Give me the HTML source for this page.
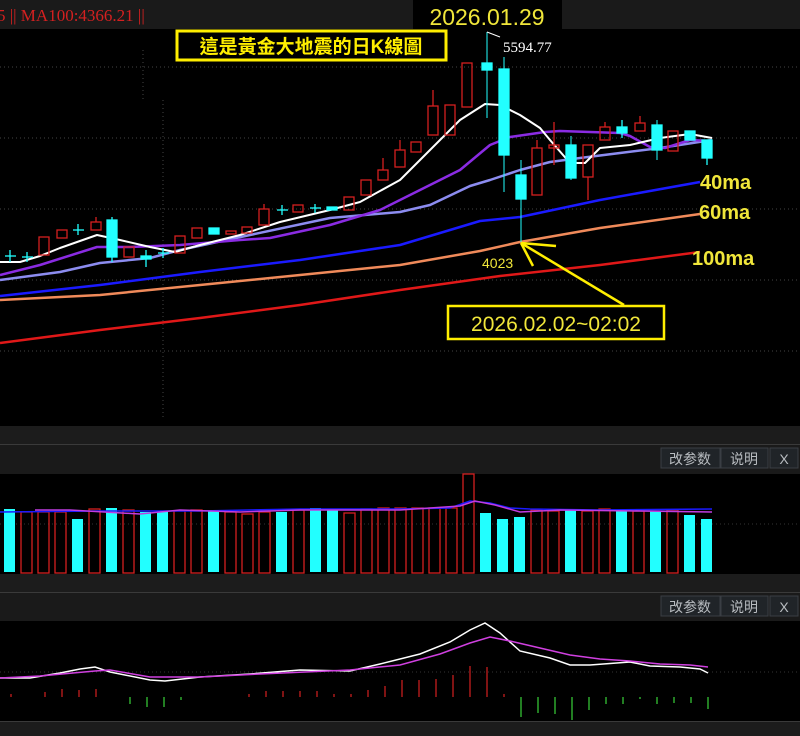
<!DOCTYPE html>
<html><head><meta charset="utf-8"><style>
html,body{margin:0;padding:0;background:#000;width:800px;height:736px;overflow:hidden}
svg{display:block}
.btn{font-family:"Liberation Sans","Noto Sans CJK SC",sans-serif;font-size:14px;fill:#b8bcc0}
</style></head><body>
<svg width="800" height="736" viewBox="0 0 800 736" xmlns="http://www.w3.org/2000/svg">
<rect width="800" height="736" fill="#000"/>
<rect x="0" y="0" width="800" height="29" fill="#1a1a1a"/>
<text x="-3" y="21" font-family="Liberation Serif,serif" font-size="17" fill="#d42020">5 ||  MA100:4366.21 ||</text>
<rect x="413" y="0" width="149" height="30" fill="#000"/>
<text x="487" y="25" text-anchor="middle" font-family="Liberation Sans,sans-serif" font-size="23" fill="#f0e63a">2026.01.29</text>
<g stroke="#444" stroke-dasharray="1,3" stroke-width="1">
<line x1="0" y1="67" x2="800" y2="67"/><line x1="0" y1="138" x2="800" y2="138"/><line x1="0" y1="209" x2="800" y2="209"/><line x1="0" y1="280" x2="800" y2="280"/><line x1="0" y1="351" x2="800" y2="351"/>
<line x1="163" y1="100" x2="163" y2="420"/><line x1="143" y1="50" x2="143" y2="100"/>
</g>
<rect x="177" y="31" width="269" height="29" fill="#000" stroke="#ffee00" stroke-width="3"/>
<text x="311" y="53" text-anchor="middle" font-family="Liberation Sans,'Noto Sans CJK TC',sans-serif" font-weight="bold" font-size="19" fill="#ffee00">這是黃金大地震的日K線圖</text>
<g fill="none" stroke-width="2.5" stroke-linejoin="round">
<polyline stroke="#e01818" points="0,343 100,330 200,318 300,305 400,290 500,276 600,265 700,252"/>
<polyline stroke="#f08a5a" points="0,300 100,295 200,285 300,275 400,265 480,251 520,242 600,228 700,214"/>
<polyline stroke="#1a1aff" points="0,296 100,285 200,272 300,260 400,245 480,221 520,217 600,200 700,182"/>
<polyline stroke="#8c8cf0" points="0,280 60,272 100,263 150,258 180,250 250,235 330,218 400,212 430,205 470,186 490,180 520,170 550,162 580,158 620,153 660,148 712,140"/>
<polyline stroke="#8a2be2" points="0,275 40,265 97,247 130,247 180,245 240,240 270,238 330,225 380,210 420,190 460,170 490,145 510,137 545,132 560,131 620,133 630,136 650,147 665,148 690,140 712,141"/>
<polyline stroke="#fff" stroke-width="2" points="0,262 20,262 40,256 60,248 97,235 120,240 150,247 175,252 200,245 240,235 280,222 330,210 360,202 400,180 430,150 460,120 485,104 500,105 520,115 540,128 550,140 570,163 585,163 600,148 630,145 660,138 690,134 712,138"/>
</g>
<g stroke-width="1.3">
<g stroke="#d42020" fill="none">
<rect x="39" y="237" width="10" height="18"/><rect x="57" y="230" width="10" height="8"/><rect x="91" y="222" width="10" height="8"/><line x1="96" y1="217" x2="96" y2="222"/>
<rect x="124" y="247" width="10" height="10"/><rect x="175" y="236" width="10" height="17"/><rect x="192" y="228" width="10" height="10"/>
<rect x="226" y="231" width="10" height="3"/><rect x="242" y="227" width="10" height="6"/><rect x="259" y="209" width="10" height="16"/><line x1="264" y1="204" x2="264" y2="209"/>
<rect x="293" y="205" width="10" height="7"/><rect x="344" y="197" width="10" height="13"/><rect x="361" y="180" width="10" height="15"/><rect x="378" y="170" width="10" height="10"/><line x1="383" y1="158" x2="383" y2="170"/>
<rect x="395" y="150" width="10" height="17"/><line x1="400" y1="140" x2="400" y2="150"/><rect x="411" y="142" width="10" height="10"/>
<rect x="428" y="106" width="10" height="29"/><line x1="433" y1="90" x2="433" y2="106"/><rect x="445" y="105" width="10" height="30"/>
<rect x="462" y="63" width="10" height="44"/>
<rect x="532" y="148" width="10" height="47"/><line x1="537" y1="140" x2="537" y2="148"/>
<rect x="549" y="145" width="10" height="3"/><line x1="554" y1="122" x2="554" y2="165"/>
<rect x="583" y="145" width="10" height="32"/><line x1="588" y1="177" x2="588" y2="200"/>
<rect x="600" y="127" width="10" height="13"/><line x1="605" y1="122" x2="605" y2="127"/>
<rect x="635" y="123" width="10" height="8"/><line x1="640" y1="116" x2="640" y2="123"/>
<rect x="668" y="131" width="10" height="20"/>
</g>
<g stroke="#2ff" fill="#2ff">
<line x1="5" y1="256" x2="16" y2="256"/><line x1="10" y1="250" x2="10" y2="262"/>
<line x1="22" y1="257" x2="33" y2="257"/><line x1="27" y1="252" x2="27" y2="262"/>
<line x1="73" y1="230" x2="84" y2="230"/><line x1="78" y1="224" x2="78" y2="235"/>
<rect x="107" y="220" width="10" height="37"/><line x1="112" y1="217" x2="112" y2="262"/>
<rect x="141" y="256" width="10" height="3"/><line x1="146" y1="250" x2="146" y2="267"/>
<line x1="158" y1="253" x2="169" y2="253"/><line x1="163" y1="248" x2="163" y2="258"/>
<rect x="209" y="228" width="10" height="6"/>
<line x1="277" y1="210" x2="288" y2="210"/><line x1="282" y1="205" x2="282" y2="215"/>
<line x1="310" y1="208" x2="321" y2="208"/><line x1="315" y1="204" x2="315" y2="213"/>
<rect x="327" y="207" width="10" height="3"/>
<rect x="482" y="63" width="10" height="7"/><line x1="487" y1="32" x2="487" y2="118" stroke-width="1"/>
<rect x="499" y="69" width="10" height="86"/><line x1="504" y1="57" x2="504" y2="192" stroke-width="1"/>
<rect x="516" y="175" width="10" height="24"/><line x1="521" y1="160" x2="521" y2="242" stroke-width="1"/>
<rect x="566" y="145" width="10" height="33"/><line x1="571" y1="136" x2="571" y2="180" stroke-width="1"/>
<rect x="617" y="127" width="10" height="6"/><line x1="622" y1="120" x2="622" y2="138"/>
<rect x="652" y="125" width="10" height="25"/><line x1="657" y1="120" x2="657" y2="160" stroke-width="1"/>
<rect x="685" y="131" width="10" height="9"/>
<rect x="702" y="140" width="10" height="18"/><line x1="707" y1="158" x2="707" y2="165"/>
</g>
</g>
<polyline points="487,32 500,37" stroke="#fff" fill="none" stroke-width="1"/>
<text x="503" y="52" font-family="Liberation Serif,serif" font-size="15" fill="#fff">5594.77</text>
<g font-family="Liberation Sans,sans-serif" font-weight="bold" fill="#f0e63a">
<text x="700" y="189" font-size="20">40ma</text>
<text x="699" y="219" font-size="20">60ma</text>
<text x="692" y="265" font-size="20">100ma</text>
<text x="482" y="268" font-size="14" font-weight="normal">4023</text>
</g>
<g stroke="#ffee00" stroke-width="2.5" fill="none">
<line x1="521" y1="243" x2="624" y2="305"/><line x1="521" y1="243" x2="556" y2="246"/><line x1="521" y1="243" x2="533" y2="266"/>
</g>
<rect x="448" y="306" width="216" height="33" fill="#000" stroke="#ffee00" stroke-width="2.5"/>
<text x="556" y="331" text-anchor="middle" font-family="Liberation Sans,sans-serif" font-size="21" fill="#f0e63a">2026.02.02~02:02</text>
<rect x="0" y="426" width="800" height="18" fill="#1c1c1c"/>
<rect x="0" y="444" width="800" height="1" fill="#3a3a3a"/>
<rect x="0" y="445" width="800" height="29" fill="#1a1a1a"/>
<rect x="0" y="574" width="800" height="18" fill="#1c1c1c"/>
<rect x="0" y="592" width="800" height="1" fill="#3a3a3a"/>
<rect x="0" y="593" width="800" height="28" fill="#1a1a1a"/>
<rect x="0" y="721" width="800" height="1" fill="#3a3a3a"/>
<rect x="0" y="722" width="800" height="14" fill="#1c1c1c"/>
<g>
<rect x="661" y="448" width="59" height="20" fill="#202428" stroke="#3a3e44"/><text class="btn" x="690" y="464" text-anchor="middle">改参数</text>
<rect x="721" y="448" width="47" height="20" fill="#202428" stroke="#3a3e44"/><text class="btn" x="744" y="464" text-anchor="middle">说明</text>
<rect x="770" y="448" width="28" height="20" fill="#202428" stroke="#3a3e44"/><text class="btn" x="784" y="464" text-anchor="middle">X</text>
<rect x="661" y="596" width="59" height="20" fill="#202428" stroke="#3a3e44"/><text class="btn" x="690" y="612" text-anchor="middle">改参数</text>
<rect x="721" y="596" width="47" height="20" fill="#202428" stroke="#3a3e44"/><text class="btn" x="744" y="612" text-anchor="middle">说明</text>
<rect x="770" y="596" width="28" height="20" fill="#202428" stroke="#3a3e44"/><text class="btn" x="784" y="612" text-anchor="middle">X</text>
</g>
<line x1="0" y1="524" x2="800" y2="524" stroke="#333" stroke-dasharray="1,3"/>
<g stroke-width="1.3">
<g fill="#2ff">
<rect x="4" y="509" width="11" height="63"/><rect x="72" y="519" width="11" height="53"/><rect x="106" y="508" width="11" height="64"/><rect x="140" y="512" width="11" height="60"/><rect x="157" y="511" width="11" height="61"/><rect x="208" y="511" width="11" height="61"/><rect x="276" y="512" width="11" height="60"/><rect x="310" y="508" width="11" height="64"/><rect x="327" y="509" width="11" height="63"/><rect x="480" y="513" width="11" height="59"/><rect x="497" y="519" width="11" height="53"/><rect x="514" y="517" width="11" height="55"/><rect x="565" y="510" width="11" height="62"/><rect x="616" y="510" width="11" height="62"/><rect x="650" y="511" width="11" height="61"/><rect x="684" y="515" width="11" height="57"/><rect x="701" y="519" width="11" height="53"/>
</g>
<g fill="none" stroke="#d42020">
<rect x="21" y="512" width="11" height="61"/><rect x="38" y="512" width="11" height="61"/><rect x="55" y="512" width="11" height="61"/><rect x="89" y="509" width="11" height="64"/><rect x="123" y="510" width="11" height="63"/><rect x="174" y="511" width="11" height="62"/><rect x="191" y="510" width="11" height="63"/><rect x="225" y="512" width="11" height="61"/><rect x="242" y="514" width="11" height="59"/><rect x="259" y="512" width="11" height="61"/><rect x="293" y="510" width="11" height="63"/><rect x="344" y="513" width="11" height="60"/><rect x="361" y="509" width="11" height="64"/><rect x="378" y="508" width="11" height="65"/><rect x="395" y="508" width="11" height="65"/><rect x="412" y="508" width="11" height="65"/><rect x="429" y="508" width="11" height="65"/><rect x="446" y="508" width="11" height="65"/><rect x="463" y="474" width="11" height="99"/><rect x="531" y="510" width="11" height="63"/><rect x="548" y="511" width="11" height="62"/><rect x="582" y="511" width="11" height="62"/><rect x="599" y="509" width="11" height="64"/><rect x="633" y="511" width="11" height="62"/><rect x="667" y="510" width="11" height="63"/>
</g>
</g>
<polyline points="0,512 100,511 200,511 300,509 400,509 450,508 470,501 490,503 510,508 530,509 600,510 712,509" stroke="#1a1aff" fill="none" stroke-width="1.5"/>
<polyline points="35,510 70,510 140,514 180,510 240,512 300,510 400,510 460,506 475,501 495,505 520,512 560,510 640,511 712,512" stroke="#c03ce0" fill="none" stroke-width="1.5"/>
<line x1="0" y1="672" x2="800" y2="672" stroke="#333" stroke-dasharray="1,3"/>
<polyline fill="none" stroke="#fff" stroke-width="1.5" points="0,678 30,678 60,673 80,669 95,667 110,672 150,680 165,681 200,677 250,674 300,670 350,671 380,664 420,654 450,642 470,630 485,623 500,633 520,651 550,658 570,665 590,665 630,662 650,666 680,667 700,669 708,673"/>
<polyline fill="none" stroke="#d040e0" stroke-width="1.5" points="0,678 40,676 95,671 110,670 150,677 200,677 260,674 350,670 400,665 440,654 470,643 490,637 510,641 540,648 570,655 600,659 630,661 660,664 690,665 708,667"/>
<g stroke-width="1.2">
<g stroke="#d42020">
<line x1="11" y1="694" x2="11" y2="697"/><line x1="45" y1="692" x2="45" y2="697"/><line x1="62" y1="689" x2="62" y2="697"/><line x1="79" y1="690" x2="79" y2="697"/><line x1="96" y1="689" x2="96" y2="697"/>
<line x1="249" y1="694" x2="249" y2="697"/><line x1="266" y1="691" x2="266" y2="697"/><line x1="283" y1="691" x2="283" y2="697"/><line x1="300" y1="691" x2="300" y2="697"/><line x1="317" y1="691" x2="317" y2="697"/><line x1="334" y1="694" x2="334" y2="697"/><line x1="351" y1="694" x2="351" y2="697"/><line x1="368" y1="690" x2="368" y2="697"/><line x1="385" y1="686" x2="385" y2="697"/><line x1="402" y1="680" x2="402" y2="697"/><line x1="419" y1="680" x2="419" y2="697"/><line x1="436" y1="679" x2="436" y2="697"/><line x1="453" y1="675" x2="453" y2="697"/><line x1="470" y1="666" x2="470" y2="697"/><line x1="487" y1="667" x2="487" y2="697"/><line x1="504" y1="694" x2="504" y2="697"/>
</g>
<g stroke="#3ad23a">
<line x1="130" y1="697" x2="130" y2="704"/><line x1="147" y1="697" x2="147" y2="707"/><line x1="164" y1="697" x2="164" y2="707"/><line x1="181" y1="697" x2="181" y2="700"/>
<line x1="521" y1="697" x2="521" y2="717"/><line x1="538" y1="697" x2="538" y2="713"/><line x1="555" y1="697" x2="555" y2="714"/><line x1="572" y1="697" x2="572" y2="720"/><line x1="589" y1="697" x2="589" y2="710"/><line x1="606" y1="697" x2="606" y2="704"/><line x1="623" y1="697" x2="623" y2="704"/><line x1="640" y1="697" x2="640" y2="699"/><line x1="657" y1="697" x2="657" y2="704"/><line x1="674" y1="697" x2="674" y2="703"/><line x1="691" y1="697" x2="691" y2="703"/><line x1="708" y1="697" x2="708" y2="709"/>
</g>
</g>
</svg>
</body></html>
